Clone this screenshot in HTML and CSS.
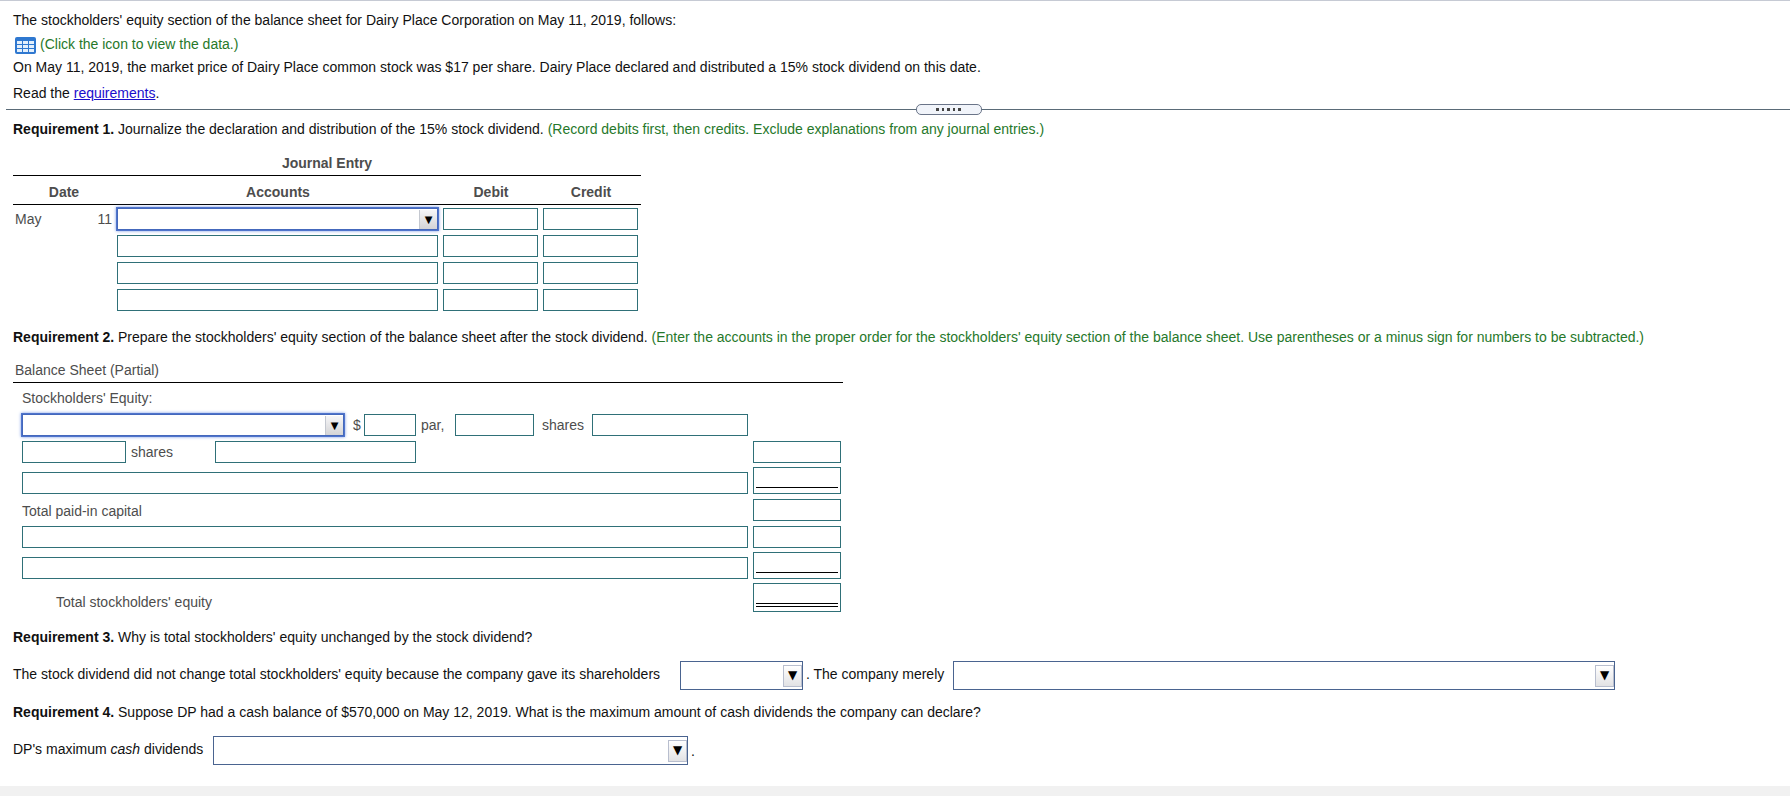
FILE: index.html
```html
<!DOCTYPE html>
<html lang="en">
<head>
    <meta charset="UTF-8">
    <meta name="viewport" content="width=device-width, initial-scale=1.0">
    <title>Stockholders' Equity</title>
    <link rel="stylesheet" href="styles.css">
</head>
<body>
    <main class="exercise">
        <section class="intro">
            <p>The stockholders' equity section of the balance sheet for Dairy Place Corporation on May 11, 2019, follows:</p>
            <p class="data-line">
                <button type="button" class="data-button" aria-label="View the data">
                    <svg width="21" height="17" viewBox="0 0 21 17">
                        <rect width="21" height="17" rx="2" fill="#2f78d0"/>
                        <g fill="#e4f0fc">
                            <rect x="2" y="4" width="5" height="3"/>
                            <rect x="8" y="4" width="5" height="3"/>
                            <rect x="14" y="4" width="5" height="3"/>
                            <rect x="2" y="8" width="5" height="3"/>
                            <rect x="8" y="8" width="5" height="3"/>
                            <rect x="14" y="8" width="5" height="3"/>
                            <rect x="2" y="12" width="5" height="3"/>
                            <rect x="8" y="12" width="5" height="3"/>
                            <rect x="14" y="12" width="5" height="3"/>
                        </g>
                    </svg>
                </button>
                <span class="hint">(Click the icon to view the data.)</span>
            </p>
            <p>On May 11, 2019, the market price of Dairy Place common stock was $17 per share. Dairy Place declared and distributed a 15% stock dividend on this date.</p>
            <p class="read">Read the <a href="#requirements">requirements</a>.</p>
        </section>

        <div class="divider">
            <button type="button" class="handle" aria-label="Resize panel">
                <i></i><i></i><i></i><i></i><i></i>
            </button>
        </div>

        <section class="work" id="requirements">
            <p class="first"><b>Requirement 1.</b> Journalize the declaration and distribution of the 15% stock dividend. <span class="hint">(Record debits first, then credits. Exclude explanations from any journal entries.)</span></p>

            <table class="journal">
                <colgroup>
                    <col class="col-date">
                    <col class="col-accounts">
                    <col class="col-amount">
                    <col class="col-amount">
                </colgroup>
                <thead>
                    <tr class="title"><th colspan="4">Journal Entry</th></tr>
                    <tr class="heads">
                        <th>Date</th>
                        <th>Accounts</th>
                        <th>Debit</th>
                        <th>Credit</th>
                    </tr>
                </thead>
                <tbody>
                    <tr>
                        <td><div class="date"><span>May</span><span>11</span></div></td>
                        <td><span class="dropdown active"><select aria-label="Account 1"><option></option></select></span></td>
                        <td><input type="text" aria-label="Debit 1"></td>
                        <td><input type="text" aria-label="Credit 1"></td>
                    </tr>
                    <tr>
                        <td></td>
                        <td><input type="text" aria-label="Account 2"></td>
                        <td><input type="text" aria-label="Debit 2"></td>
                        <td><input type="text" aria-label="Credit 2"></td>
                    </tr>
                    <tr>
                        <td></td>
                        <td><input type="text" aria-label="Account 3"></td>
                        <td><input type="text" aria-label="Debit 3"></td>
                        <td><input type="text" aria-label="Credit 3"></td>
                    </tr>
                    <tr>
                        <td></td>
                        <td><input type="text" aria-label="Account 4"></td>
                        <td><input type="text" aria-label="Debit 4"></td>
                        <td><input type="text" aria-label="Credit 4"></td>
                    </tr>
                </tbody>
            </table>

            <p class="question"><b>Requirement 2.</b> Prepare the stockholders' equity section of the balance sheet after the stock dividend. <span class="hint">(Enter the accounts in the proper order for the stockholders' equity section of the balance sheet. Use parentheses or a minus sign for numbers to be subtracted.)</span></p>

            <table class="sheet">
                <colgroup>
                    <col>
                    <col class="col-total">
                </colgroup>
                <thead>
                    <tr class="title"><th colspan="2">Balance Sheet (Partial)</th></tr>
                </thead>
                <tbody>
                    <tr class="heading">
                        <td>Stockholders' Equity:</td>
                        <td></td>
                    </tr>
                    <tr>
                        <td>
                            <div class="line">
                                <span class="dropdown active stock-type"><select aria-label="Stock type"><option></option></select></span>
                                <label class="unit dollar" for="par">$</label>
                                <input type="text" id="par" class="par-value">
                                <label class="unit par" for="authorized">par,</label>
                                <input type="text" id="authorized" class="authorized">
                                <label class="unit shares" for="status">shares</label>
                                <input type="text" id="status" class="status">
                            </div>
                        </td>
                        <td></td>
                    </tr>
                    <tr>
                        <td>
                            <div class="line">
                                <input type="text" id="issued" class="issued">
                                <label class="unit issued-unit" for="issued">shares</label>
                                <input type="text" class="issued-status" aria-label="Share status">
                            </div>
                        </td>
                        <td><input type="text" aria-label="Stock amount"></td>
                    </tr>
                    <tr class="tall">
                        <td><input type="text" aria-label="Paid-in capital account"></td>
                        <td><input type="text" class="sum" aria-label="Paid-in capital amount"></td>
                    </tr>
                    <tr>
                        <td><label for="paid-in">Total paid-in capital</label></td>
                        <td><input type="text" id="paid-in"></td>
                    </tr>
                    <tr>
                        <td><input type="text" aria-label="Equity account 1"></td>
                        <td><input type="text" aria-label="Equity amount 1"></td>
                    </tr>
                    <tr class="tall">
                        <td><input type="text" aria-label="Equity account 2"></td>
                        <td><input type="text" class="sum" aria-label="Equity amount 2"></td>
                    </tr>
                    <tr class="tall">
                        <td><label class="indent" for="total-equity">Total stockholders' equity</label></td>
                        <td><input type="text" id="total-equity" class="sum total"></td>
                    </tr>
                </tbody>
            </table>

            <p class="question"><b>Requirement 3.</b> Why is total stockholders' equity unchanged by the stock dividend?</p>
            <div class="answer">
                <label class="gave-label" for="gave">The stock dividend did not change total stockholders' equity because the company gave its shareholders</label>
                <span class="dropdown large gave"><select id="gave"><option></option></select></span>
                <label class="merely-label" for="merely">. The company merely</label>
                <span class="dropdown large merely"><select id="merely"><option></option></select></span>
            </div>

            <p class="question"><b>Requirement 4.</b> Suppose DP had a cash balance of $570,000 on May 12, 2019. What is the maximum amount of cash dividends the company can declare?</p>
            <div class="answer">
                <label class="maximum-label" for="maximum">DP's maximum <em>cash</em> dividends</label>
                <span class="dropdown large maximum"><select id="maximum"><option></option></select></span>
                <span class="stop">.</span>
            </div>
        </section>
    </main>
</body>
</html>
```

FILE: styles.css
```css
* {
    box-sizing: border-box;
}

body {
    margin: 0;
    background-color: #f1f1f1;
    font-family: Arial, "Liberation Sans", sans-serif;
    font-size: 14px;
    line-height: 22px;
    color: #111;
}

p {
    margin: 0;
}

a {
    color: #1a0dcc;
}

.exercise {
    background-color: #fff;
    border-top: 1px solid #c6cad4;
    padding-bottom: 21px;
}

.intro {
    display: flex;
    flex-direction: column;
    gap: 1px;
    padding: 8px 13px 0;
}

.data-line {
    display: flex;
    align-items: center;
    gap: 4px;
    height: 23px;
    padding-left: 2px;
}

.data-button {
    display: flex;
    margin-top: 3px;
    padding: 0;
    border: none;
    background: none;
    cursor: pointer;
}

.hint {
    color: #26782a;
}

.read {
    margin-top: 3px;
}

/* splitter between the problem and the work area */
.divider {
    display: flex;
    align-items: center;
    height: 11px;
    margin-left: 6px;
}

.divider::before,
.divider::after {
    content: "";
    height: 1px;
    background-color: #5a6b78;
}

.divider::before {
    width: 51%;
}

.divider::after {
    flex: 1;
}

.handle {
    display: flex;
    align-items: center;
    justify-content: center;
    gap: 3px;
    width: 66px;
    height: 11px;
    padding: 0;
    border: 1px solid #6a7488;
    border-radius: 5px;
    background-color: #f1f4fa;
}

.handle i {
    width: 3px;
    height: 3px;
    background-color: #444;
}

.handle i:nth-child(even) {
    width: 2px;
}

.work {
    padding: 0 13px;
}

.first {
    margin-top: 3px;
}

.question {
    margin-top: 11px;
}

table {
    table-layout: fixed;
    border-spacing: 0;
    color: #4d4d4d;
}

th {
    padding: 0 2px 1px;
    border-bottom: 1px solid #000;
}

td {
    height: 27px;
    padding: 3px 2px 2px;
    vertical-align: bottom;
}

input,
select {
    display: block;
    width: 100%;
    height: 22px;
    margin: 0;
    padding: 0 3px;
    border: 1px solid #2f7078;
    border-radius: 0;
    background-color: #fff;
    font: inherit;
    color: #111;
}

.journal {
    width: 628px;
    margin: 12px 0 13px;
}

.journal td {
    padding-right: 3px;
}

.heads th {
    padding-top: 5px;
}

.col-date {
    width: 102px;
}

.col-amount {
    width: 100px;
}

.date {
    display: flex;
    justify-content: space-between;
}

.dropdown {
    display: block;
    position: relative;
}

.dropdown select {
    appearance: none;
}

.dropdown::after {
    content: "▼";
    position: absolute;
    top: 2px;
    right: 1px;
    bottom: 1px;
    width: 17px;
    border-left: 1px solid #c4c8d0;
    background: linear-gradient(#f6f6f8, #d4d4d6);
    font-family: "DejaVu Sans", sans-serif;
    font-size: 10px;
    line-height: 20px;
    text-align: center;
    color: #000;
    pointer-events: none;
}

.active select {
    border-color: #4468bc;
    box-shadow: 0 0 0 1px #4f74cc, 0 0 3px 1px #7c9ce4;
}

.large select {
    height: 29px;
    border-color: #4a6490;
}

.large::after {
    top: 4px;
    bottom: 3px;
    border: 1px solid #b8bece;
    background: linear-gradient(#fff, #e2e2e4);
    font-size: 12px;
    line-height: 18px;
}

.sheet {
    width: 830px;
    margin: 11px 0 12px;
}

.sheet th {
    text-align: left;
    font-weight: normal;
}

.sheet td:first-child {
    padding-left: 9px;
    padding-right: 3px;
}

.col-total {
    width: 92px;
}

.sheet .heading td {
    height: 28px;
    padding-top: 4px;
}

.sheet .tall td {
    padding-top: 2px;
}

.sheet label {
    display: block;
    line-height: 20px;
}

.sheet .indent {
    padding-left: 34px;
}

.sum {
    height: 27px;
    background-image: linear-gradient(#000, #000);
    background-repeat: no-repeat;
    background-size: calc(100% - 4px) 1px;
    background-position: 2px 19px;
}

.total {
    height: 29px;
    background-image: linear-gradient(#000, #000), linear-gradient(#000, #000);
    background-position: 2px 19px, 2px 22px;
}

.line {
    display: flex;
    align-items: center;
}

.line > * {
    flex: none;
}

.unit {
    padding-left: 5px;
}

.stock-type {
    width: 322px;
}

.dollar {
    width: 20px;
    padding-left: 9px;
}

.par-value {
    width: 52px;
}

.par {
    width: 39px;
}

.authorized {
    width: 79px;
}

.shares {
    width: 58px;
    padding-left: 8px;
}

.status {
    width: 156px;
}

.issued {
    width: 104px;
}

.issued-unit {
    width: 89px;
}

.issued-status {
    width: 201px;
}

.answer {
    display: flex;
    align-items: center;
    margin-top: 13px;
}

.answer label {
    padding-bottom: 3px;
}

.gave-label {
    width: 667px;
}

.gave {
    width: 123px;
}

.merely-label {
    width: 150px;
    padding-left: 3px;
}

.merely {
    width: 662px;
}

.maximum-label {
    width: 200px;
}

.maximum {
    width: 475px;
}

.stop {
    padding-left: 3px;
}
```
